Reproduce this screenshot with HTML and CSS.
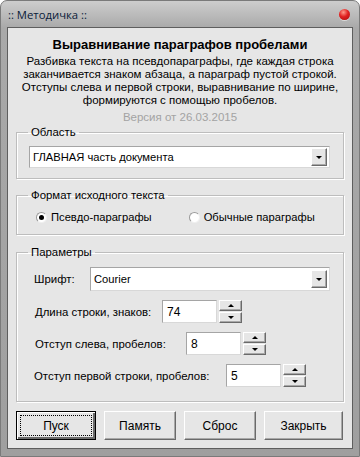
FILE: index.html
```html
<!DOCTYPE html>
<html lang="ru">
<head>
    <meta charset="UTF-8">
    <meta name="viewport" content="width=device-width, initial-scale=1.0">
    <title>Методичка</title>
    <link rel="stylesheet" href="styles.css">
</head>
<body>
    <div class="window">
        <div class="titlebar">
            <span class="title">:: Методичка ::</span>
            <span class="close-dot"></span>
        </div>

        <div class="client">
            <div class="intro">
                <h1>Выравнивание параграфов пробелами</h1>
                <p>Разбивка текста на псевдопараграфы, где каждая строка<br>
                заканчивается знаком абзаца, а параграф пустой строкой.<br>
                Отступы слева и первой строки, выравнивание по ширине,<br>
                формируются с помощью пробелов.</p>
                <p class="version">Версия от 26.03.2015</p>
            </div>

            <fieldset class="group group-area">
                <legend>Область</legend>
                <div class="combo combo-area">
                    <span class="combo-value">ГЛАВНАЯ часть документа</span>
                    <span class="combo-btn"><span class="arrow-down"></span></span>
                </div>
            </fieldset>

            <fieldset class="group group-format">
                <legend>Формат исходного текста</legend>
                <div class="radio-row">
                    <label class="radio radio-first"><span class="radio-dot checked"></span>Псевдо-параграфы</label>
                    <label class="radio radio-second"><span class="radio-dot"></span>Обычные параграфы</label>
                </div>
            </fieldset>

            <fieldset class="group group-params">
                <legend>Параметры</legend>
                <div class="param-row row-font">
                    <span class="param-label label-font">Шрифт:</span>
                    <div class="combo combo-font">
                        <span class="combo-value">Courier</span>
                        <span class="combo-btn"><span class="arrow-down"></span></span>
                    </div>
                </div>
                <div class="param-row row-len">
                    <span class="param-label label-len">Длина строки, знаков:</span>
                    <span class="textbox">74</span>
                    <span class="spin">
                        <span class="spin-btn"><span class="arrow-up"></span></span>
                        <span class="spin-btn"><span class="arrow-down"></span></span>
                    </span>
                </div>
                <div class="param-row row-left">
                    <span class="param-label label-left">Отступ слева, пробелов:</span>
                    <span class="textbox">8</span>
                    <span class="spin">
                        <span class="spin-btn"><span class="arrow-up"></span></span>
                        <span class="spin-btn"><span class="arrow-down"></span></span>
                    </span>
                </div>
                <div class="param-row row-first">
                    <span class="param-label label-first">Отступ первой строки, пробелов:</span>
                    <span class="textbox">5</span>
                    <span class="spin">
                        <span class="spin-btn"><span class="arrow-up"></span></span>
                        <span class="spin-btn"><span class="arrow-down"></span></span>
                    </span>
                </div>
            </fieldset>

            <div class="buttons">
                <button class="btn btn-default btn-start"><span class="focus">Пуск</span></button>
                <button class="btn btn-mid">Память</button>
                <button class="btn btn-mid">Сброс</button>
                <button class="btn btn-close">Закрыть</button>
            </div>
        </div>
    </div>
</body>
</html>
```

FILE: styles.css
```css
body {
    margin: 0;
    background-color: #fff;
    font-family: "Liberation Sans", Arial, sans-serif;
    font-size: 12px;
    color: #000;
}
.window {
    width: 360px;
    height: 457px;
    box-sizing: border-box;
    border-radius: 7px 7px 0 0;
    border: 1px solid #7a7a7a;
    background: linear-gradient(#cdcdcd, #a9a9a9 27px, #9f9f9f);
    padding: 0 6px 7px 6px;
    display: flex;
    flex-direction: column;
}
.titlebar {
    height: 26px;
    display: flex;
    align-items: center;
    justify-content: space-between;
    flex-shrink: 0;
}
.title {
    font-family: "Open Sans", sans-serif;
    font-size: 11.3px;
    color: #0a1b3a;
    margin-left: 1px;
    margin-top: 1px;
}
.close-dot {
    width: 11px;
    height: 11px;
    border-radius: 50%;
    background: radial-gradient(circle at 40% 30%, #ff9a8a, #e02020 45%, #a80c0c);
    box-shadow: 0 1px 0 rgba(255, 255, 255, 0.5);
    margin-right: 3px;
    margin-top: 1px;
}
.client {
    flex: 1;
    background-color: #e6e6e6;
    border: 1px solid #5e5e5e;
    padding: 0 8px 0 8px;
    display: flex;
    flex-direction: column;
}
.intro {
    text-align: center;
    padding-top: 8px;
}
.intro h1 {
    margin: 0;
    font-size: 13px;
    line-height: 18px;
    font-weight: bold;
}
.intro p {
    margin: 1px 0 0 0;
    font-size: 11.5px;
    line-height: 13px;
}
.intro .version {
    color: #a3a3a3;
    margin-top: 4px;
}
.group {
    margin: 0;
    padding: 0 0 0 12px;
    border: 1px solid #bdbdbd;
    box-shadow: inset 1px 1px 0 #fff, 1px 1px 0 #fff;
    width: 328px;
    box-sizing: border-box;
}
.group legend {
    padding: 0 3px;
    margin-left: -1px;
    font-size: 11.4px;
    line-height: 13px;
}
.group-area {
    margin-top: 2px;
    padding-top: 7px;
    padding-bottom: 10px;
}
.group-format {
    margin-top: 10px;
    padding-top: 8px;
    padding-bottom: 10px;
}
.group-params {
    margin-top: 11px;
    padding-top: 8px;
    padding-bottom: 14px;
}
.combo {
    background-color: #fff;
    border: 1px solid #a5a5a5;
    border-right-color: #d8d8d8;
    border-bottom-color: #d8d8d8;
    display: flex;
    align-items: center;
    justify-content: space-between;
    box-sizing: border-box;
}
.combo-area {
    width: 301px;
    height: 22px;
}
.combo-font {
    width: 240px;
    height: 24px;
}
.combo-value {
    padding-left: 3px;
    font-size: 11.2px;
}
.combo-btn {
    width: 14px;
    height: 16px;
    margin-right: 2px;
    background-color: #e6e6e6;
    border: 1px solid #fff;
    border-right-color: #6a6a6a;
    border-bottom-color: #6a6a6a;
    box-shadow: inset -1px -1px 0 #a8a8a8;
    display: flex;
    align-items: center;
    justify-content: center;
}
.arrow-down {
    width: 0;
    height: 0;
    border-left: 3px solid transparent;
    border-right: 3px solid transparent;
    border-top: 3px solid #000;
}
.arrow-up {
    width: 0;
    height: 0;
    border-left: 3px solid transparent;
    border-right: 3px solid transparent;
    border-bottom: 3px solid #000;
}
.radio-row {
    display: flex;
    align-items: center;
    height: 14px;
}
.radio {
    display: flex;
    align-items: center;
    font-size: 11.2px;
}
.radio-first {
    margin-left: 7px;
}
.radio-second {
    margin-left: 37px;
}
.radio-dot {
    width: 11px;
    height: 11px;
    border-radius: 50%;
    background-color: #fff;
    border: 1px solid #9a9a9a;
    border-right-color: #f0f0f0;
    border-bottom-color: #f0f0f0;
    box-sizing: border-box;
    margin-right: 4px;
    display: flex;
    align-items: center;
    justify-content: center;
}
.radio-dot.checked::after {
    content: "";
    width: 5px;
    height: 5px;
    border-radius: 50%;
    background-color: #000;
}
.param-row {
    display: flex;
    align-items: center;
}
.row-font {
    margin-left: 5px;
}
.row-len {
    margin-top: 9px;
    margin-left: 6px;
}
.row-left {
    margin-top: 9px;
    margin-left: 6px;
}
.row-first {
    margin-top: 9px;
    margin-left: 5px;
}
.param-label {
    font-size: 11.4px;
}
.label-font {
    width: 56px;
}
.label-len {
    width: 127px;
}
.label-left {
    width: 151px;
}
.label-first {
    width: 192px;
}
.textbox {
    width: 55px;
    height: 23px;
    box-sizing: border-box;
    background-color: #fff;
    border: 1px solid #a5a5a5;
    border-right-color: #d8d8d8;
    border-bottom-color: #d8d8d8;
    padding-left: 4px;
    display: flex;
    align-items: center;
    font-size: 12px;
}
.spin {
    display: flex;
    flex-direction: column;
    margin-left: 2px;
}
.spin-btn {
    width: 23px;
    height: 11px;
    box-sizing: border-box;
    background-color: #e6e6e6;
    border: 1px solid #fff;
    border-right-color: #6a6a6a;
    border-bottom-color: #6a6a6a;
    box-shadow: inset -1px -1px 0 #a8a8a8;
    display: flex;
    align-items: center;
    justify-content: center;
}
.spin-btn + .spin-btn {
    margin-top: 1px;
}
.buttons {
    display: flex;
    margin-top: 9px;
    gap: 8px;
}
.btn {
    height: 29px;
    box-sizing: border-box;
    font-family: "Liberation Sans", Arial, sans-serif;
    font-size: 12px;
    background-color: #e6e6e6;
    border: 1px solid #fff;
    border-right-color: #6a6a6a;
    border-bottom-color: #6a6a6a;
    box-shadow: inset -1px -1px 0 #a8a8a8;
    padding: 0;
    color: #000;
}
.btn-start {
    width: 80px;
}
.btn-mid {
    width: 72px;
}
.btn-close {
    width: 79px;
}
.btn-default {
    border: 1px solid #000;
    box-shadow: inset 1px 1px 0 #fff, inset -2px -2px 0 #6a6a6a;
    padding: 3px;
}
.btn-default .focus {
    display: flex;
    align-items: center;
    justify-content: center;
    height: 100%;
    border: 1px dotted #000;
    box-sizing: border-box;
}
```
